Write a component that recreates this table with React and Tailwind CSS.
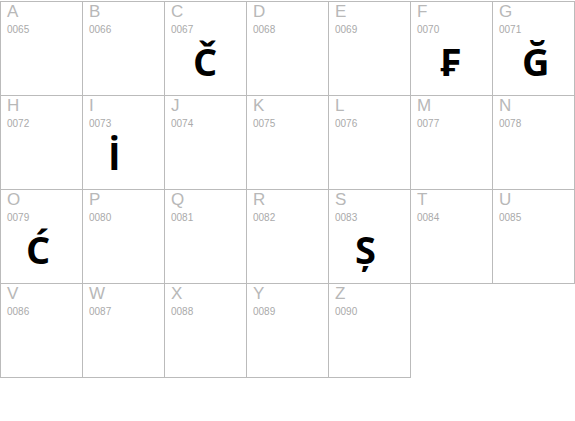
import React from 'react';

const glyphs = {
  C: { ch: 'Č', pl: 'pl-[28px]' },
  F: { ch: '₣', pl: 'pl-[29px]' },
  G: { ch: 'Ğ', pl: 'pl-[29px]' },
  I: { ch: 'İ', pl: 'pl-[25px]' },
  O: { ch: 'Ć', pl: 'pl-[25px]' },
  S: { ch: 'Ș', pl: 'pl-[26px]' },
};

const letters = Array.from({ length: 26 }, (_, i) => ({
  letter: String.fromCharCode(65 + i),
  code: String(65 + i).padStart(4, '0'),
}));

function Cell({ letter, code }) {
  const g = glyphs[letter];
  return (
    <div className="h-[94px] w-[82px] border-r border-b border-[#bbbbbb]">
      <div className="pl-[6px] pt-[2px] text-[17px] leading-[16px] text-[#b8b8b8]">{letter}</div>
      <div className="mt-[5px] pl-[6px] text-[10px] leading-[10px] text-[#aaaaaa]">{code}</div>
      {g && (
        <div
          className={`mt-[7px] ${g.pl} text-[38px] leading-[38px] font-bold text-black`}
          style={{ fontFamily: '"Open Sans", "Noto Sans", sans-serif' }}
        >
          {g.ch}
        </div>
      )}
    </div>
  );
}

export default function App() {
  return (
    <div className="h-[421px] w-[575px] bg-white" style={{ fontFamily: '"Liberation Sans", Arial, sans-serif' }}>
      <div className="inline-grid grid-cols-[repeat(7,82px)] border-l border-t border-[#bbbbbb]">
        {letters.map((l) => (
          <Cell key={l.letter} {...l} />
        ))}
      </div>
    </div>
  );
}
